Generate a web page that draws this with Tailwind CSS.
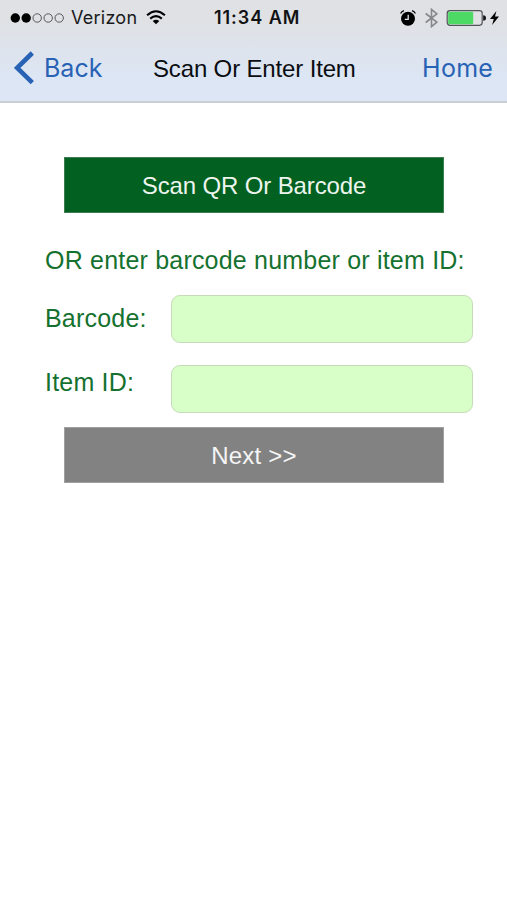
<!DOCTYPE html>
<html lang="en">
<head>
<meta charset="utf-8">
<title>Scan Or Enter Item</title>
<script src="https://cdn.jsdelivr.net/npm/@tailwindcss/browser@4"></script>
</head>
<body class="min-h-[900px] w-[507px] overflow-hidden bg-white font-['Liberation_Sans',Arial,sans-serif]">
<header class="h-[103px] border-b-2 border-[#c9d0d5] bg-linear-to-b from-[#dfe1e4] from-20% to-[#dce6f5] to-80%">
  <div class="flex h-[35px] items-center pl-[10px] font-[Inter,sans-serif] text-black">
    <svg class="h-[12px] w-[55px]" viewBox="0 0 55 12" fill="none" stroke="#55585c" stroke-width="1">
      <circle cx="5.3" cy="6" r="4.7" fill="#000" stroke="none"/><circle cx="16.2" cy="6" r="4.7" fill="#000" stroke="none"/>
      <circle cx="27.2" cy="6" r="4.2"/><circle cx="38.2" cy="6" r="4.2"/><circle cx="49.2" cy="6" r="4.2"/>
    </svg>
    <span class="ml-[6px] w-[67px] text-[18px] tracking-[0.25px] whitespace-nowrap text-[#18191b]">Verizon</span>
    <svg class="ml-[8px] h-[15px] w-[20px]" viewBox="0 0 20 15" fill="none" stroke="#000" stroke-width="2.1">
      <path d="M1.1 5.2Q10-2.7 18.9 5.2"/><path d="M4.2 8.6Q10 3.6 15.8 8.6"/><path d="M10 14.3 6.7 11Q10 8.4 13.3 11Z" fill="#000" stroke="none"/>
    </svg>
    <span class="ml-[48px] w-[88px] text-[18px] font-semibold tracking-[0.95px] whitespace-nowrap text-[#111214]">11:34 AM</span>
    <svg class="ml-[98px] h-[16px] w-[16px]" viewBox="0 0 16 16" fill="none">
      <circle cx="8" cy="8.7" r="7" fill="#000"/><path d="M.6 3.6Q1.5 1.4 4 .7M12 .7Q14.5 1.4 15.4 3.6" stroke="#000" stroke-width="1.2"/><path d="M8.2 4.8V9.3H4.8" stroke="#dfe2e6" stroke-width="1.3"/>
    </svg>
    <svg class="ml-[9px] h-[20px] w-[13px]" viewBox="0 0 13 20" fill="none" stroke="#85888d" stroke-width="1.6">
      <path d="M.7 5.5 11.8 14.2 6.5 18.6V1.4L11.8 5.8.7 14.5"/>
    </svg>
    <svg class="ml-[8px] h-[16px] w-[40px]" viewBox="0 0 40 16" fill="none">
      <rect x="1.2" y=".7" width="35" height="14.6" rx="2.7" stroke="#515458" stroke-width="1.2"/><rect x="2.2" y="1.7" width="25" height="12.6" rx="1.4" fill="#4cd964"/><path d="M37.2 5.2Q40 5.4 40 8T37.2 10.8Z" fill="#111"/>
    </svg>
    <svg class="ml-[4px] h-[14px] w-[9px]" viewBox="0 0 9 14"><path d="M6.4 0 0 8H3.8L2.1 14 9 5.6H5Z" fill="#000"/></svg>
  </div>
  <nav class="flex h-[66px] items-center pl-[14px] text-[#2862b5]">
    <svg class="h-[34px] w-[21px]" viewBox="0 0 21 34" fill="none" stroke="#2862b5" stroke-width="4.6"><path d="M18.3 2 3.2 16.8 18.3 31.6"/></svg>
    <span class="ml-[9px] w-[109px] pt-[2px] font-[Inter,sans-serif] text-[25px] font-normal whitespace-nowrap">Back</span>
    <h1 class="w-[269px] pt-px text-[24px] tracking-[-0.15px] whitespace-nowrap text-[#0b0d11]">Scan Or Enter Item</h1>
    <span class="pt-[2px] font-[Inter,sans-serif] text-[25px] tracking-[0.3px] whitespace-nowrap">Home</span>
  </nav>
</header>
<main class="flex flex-col pt-[54px]">
  <button class="ml-[64px] h-[56px] w-[380px] border border-[#3f7d50] bg-[#026020] pt-[2px] text-[24px] tracking-[-0.13px] text-[#edf5ee]">Scan QR Or Barcode</button>
  <p class="mt-[32px] ml-[45px] h-[30px] text-[25px] leading-[30px] tracking-[0.2px] whitespace-nowrap text-[#15712f]">OR enter barcode number or item ID:</p>
  <label class="mt-[20px] flex h-[48px] items-center text-[25px] tracking-[0.2px] text-[#15712f]"><span class="ml-[45px] w-[126px] whitespace-nowrap">Barcode:</span><input class="h-[48px] w-[302px] rounded-[9px] border border-[#c5dbb9] bg-[#d9ffc9]"></label>
  <label class="mt-[22px] flex h-[48px] items-center text-[25px] tracking-[0.2px] text-[#15712f]"><span class="ml-[45px] w-[126px] pb-[12px] whitespace-nowrap">Item ID:</span><input class="h-[48px] w-[302px] rounded-[9px] border border-[#c5dbb9] bg-[#d9ffc9]"></label>
  <button class="mt-[14px] ml-[64px] h-[56px] w-[380px] border border-[#a0a0a0] bg-[#828282] pt-[2px] text-[24px] tracking-[0.2px] text-[#f5f5f5]">Next &gt;&gt;</button>
</main>
</body>
</html>
